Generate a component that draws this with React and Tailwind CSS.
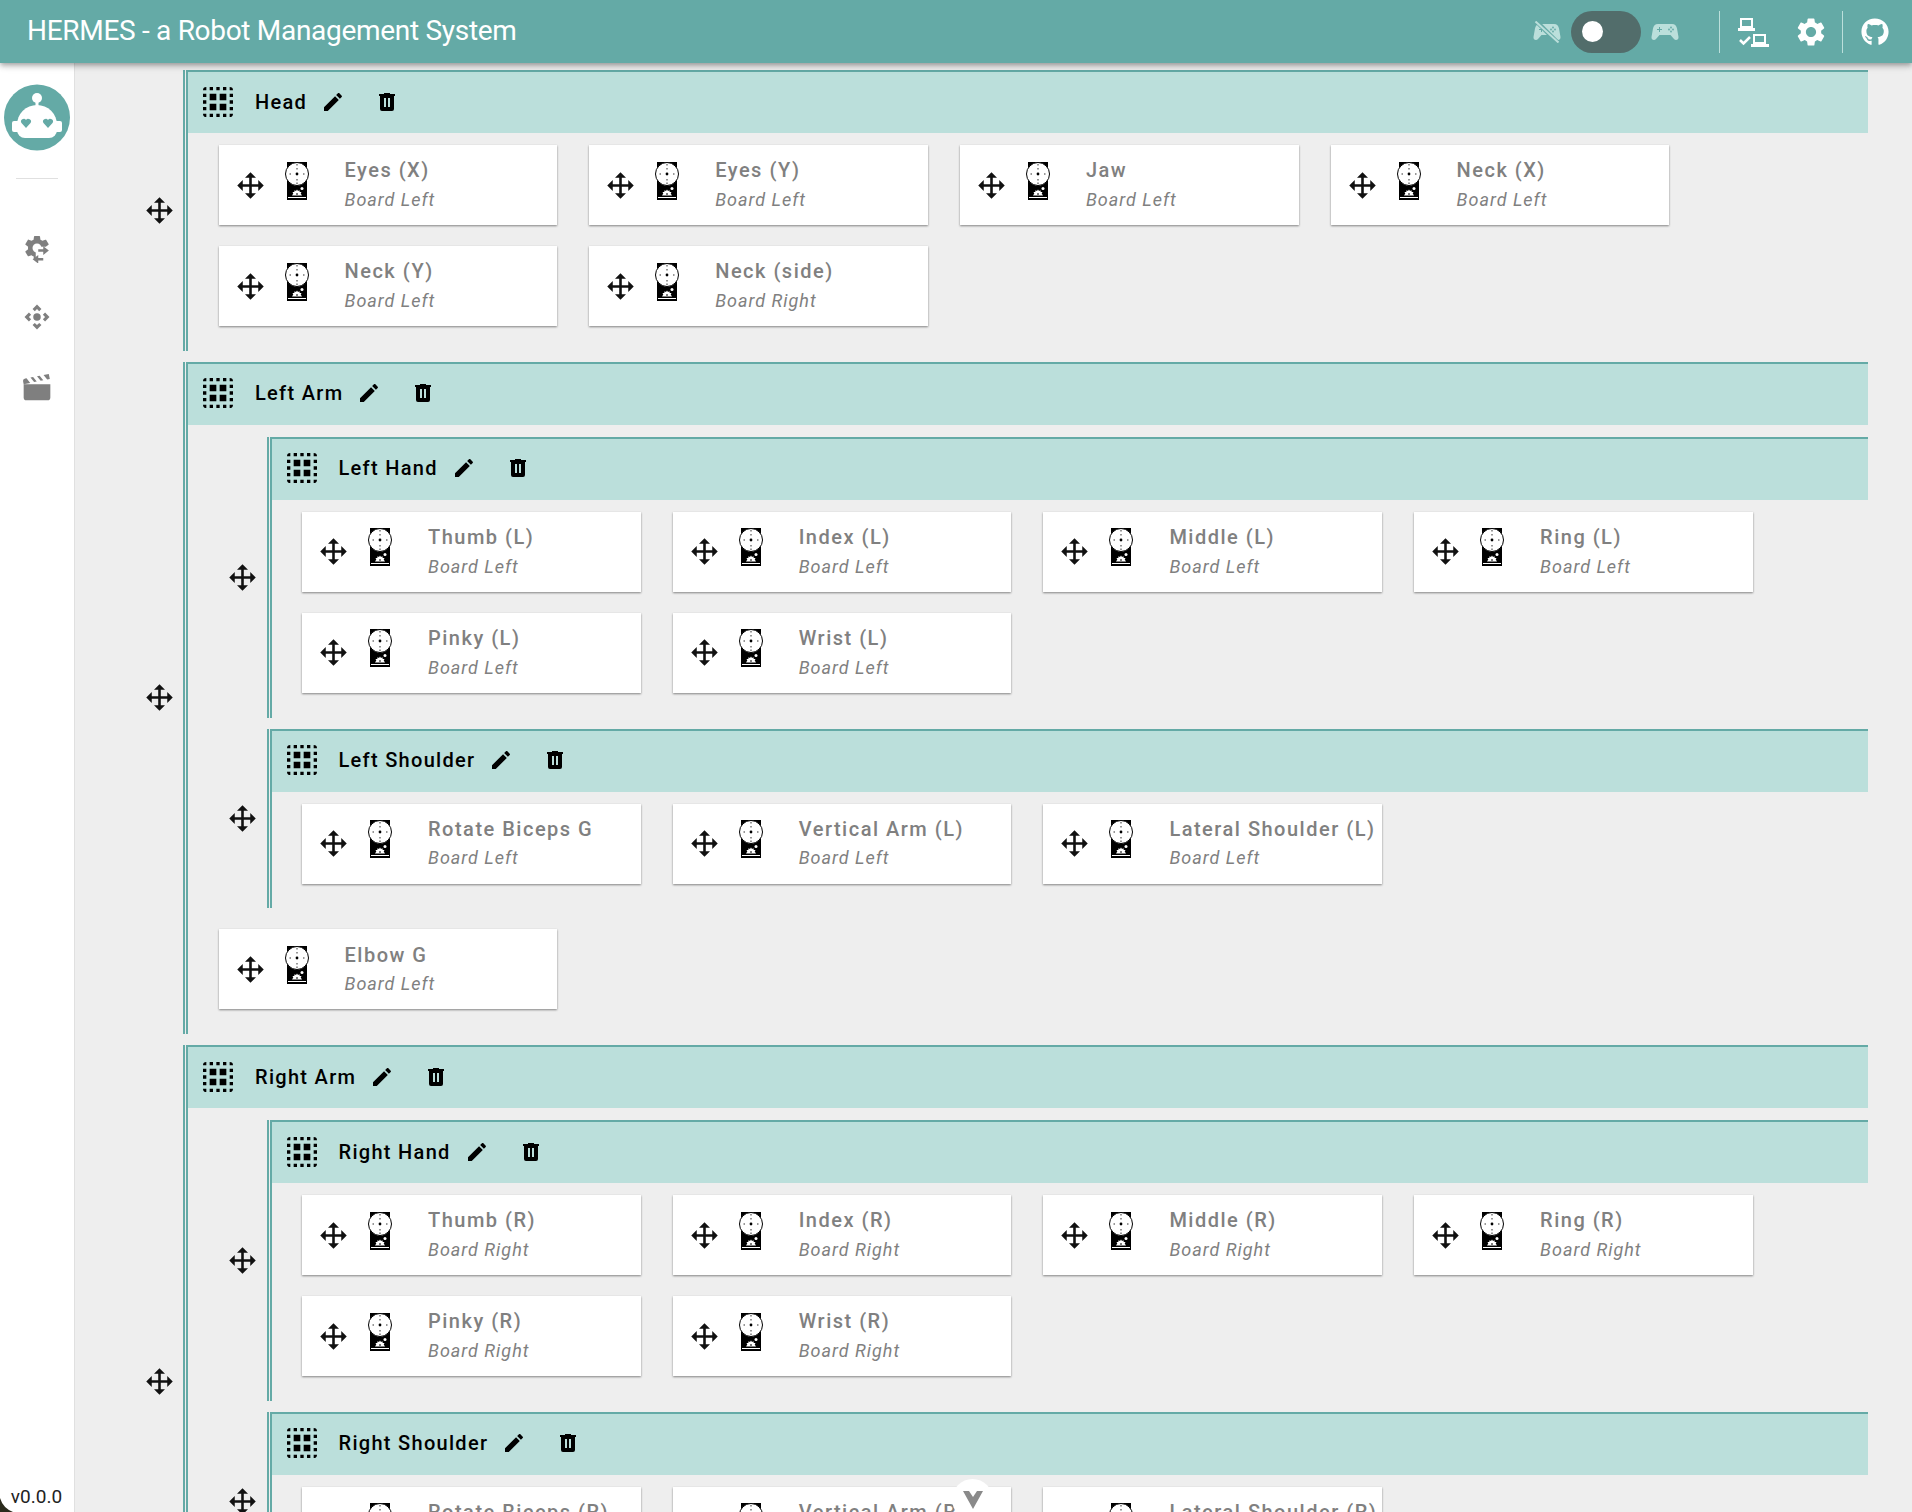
import { MdSettings, MdControlCamera } from "react-icons/md";
import { FaGithub } from "react-icons/fa";

const TEAL = "#64aaa6";

const motor = (name, board = "Left") => ({ name, board: `Board ${board}` });

const hand = (s, board) => ({
  name: `${s === "L" ? "Left" : "Right"} Hand`,
  motors: ["Thumb", "Index", "Middle", "Ring", "Pinky", "Wrist"].map((m) => motor(`${m} (${s})`, board)),
});

const tree = [
  {
    name: "Head",
    motors: [
      motor("Eyes (X)"),
      motor("Eyes (Y)"),
      motor("Jaw"),
      motor("Neck (X)"),
      motor("Neck (Y)"),
      motor("Neck (side)", "Right"),
    ],
  },
  {
    name: "Left Arm",
    groups: [
      hand("L", "Left"),
      {
        name: "Left Shoulder",
        motors: [motor("Rotate Biceps G"), motor("Vertical Arm (L)"), motor("Lateral Shoulder (L)")],
      },
    ],
    motors: [motor("Elbow G")],
  },
  {
    name: "Right Arm",
    groups: [
      hand("R", "Right"),
      {
        name: "Right Shoulder",
        motors: [
          motor("Rotate Biceps (R)", "Right"),
          motor("Vertical Arm (R)", "Right"),
          motor("Lateral Shoulder (R)", "Right"),
        ],
      },
    ],
    motors: [motor("Elbow (R)", "Right")],
  },
];

function MoveIcon() {
  return (
    <svg width="31" height="31" viewBox="0 0 24 24" fill="#111" className="shrink-0">
      <path d="M13,6V11H18V7.75L22.25,12L18,16.25V13H13V18H16.25L12,22.25L7.75,18H11V13H6V16.25L1.75,12L6,7.75V11H11V6H7.75L12,1.75L16.25,6H13Z" />
    </svg>
  );
}

function GroupIcon() {
  return (
    <svg width="40" height="40" viewBox="0 0 24 24" fill="#000" className="shrink-0">
      <path d="M5,3A2,2 0 0,0 3,5H5M7,3V5H9V3M11,3V5H13V3M15,3V5H17V3M19,3V5H21A2,2 0 0,0 19,3M3,7V9H5V7M7,7V11H11V7M13,7V11H17V7M19,7V9H21V7M3,11V13H5V11M19,11V13H21V11M7,13V17H11V13M13,13V17H17V13M3,15V17H5V15M19,15V17H21V15M3,19A2,2 0 0,0 5,21V19M7,19V21H9V19M11,19V21H13V19M15,19V21H17V19M19,19V21A2,2 0 0,0 21,19Z" />
    </svg>
  );
}

function PencilIcon() {
  return (
    <svg width="24" height="24" viewBox="0 0 24 24" fill="#000" className="shrink-0">
      <path d="M3 17.25V21h3.75L17.81 9.94l-3.75-3.75L3 17.25zM20.71 7.04c.39-.39.39-1.02 0-1.41l-2.34-2.34c-.39-.39-1.02-.39-1.41 0l-1.83 1.83 3.75 3.75 1.83-1.83z" />
    </svg>
  );
}

function TrashIcon() {
  return (
    <svg width="24" height="24" viewBox="0 0 24 24" fill="#000" className="shrink-0">
      <path d="M9,3V4H4V6H5V19A2,2 0 0,0 7,21H17A2,2 0 0,0 19,19V6H20V4H15V3H9M9,8H11V17H9V8M13,8H15V17H13V8Z" />
    </svg>
  );
}

// servo board drawing
function ServoIcon() {
  return (
    <svg width="24" height="40" viewBox="0 0 24 40" className="shrink-0 mb-[9px]">
      <rect x="2" y="1" width="20" height="38" fill="#000" />
      <circle cx="12" cy="13" r="11.5" fill="#fff" stroke="#000" strokeWidth="1" />
      <circle cx="12" cy="13" r="1.4" fill="#000" />
      <g fill="#333">
        <rect x="11.500" y="3" width="1" height="1.500" />
        <rect x="11.500" y="7" width="1" height="1.500" />
        <rect x="11.500" y="18" width="1" height="1.500" />
        <rect x="11.500" y="21.500" width="1" height="1.500" />
        <rect x="4.500" y="12.500" width="1.500" height="1" />
        <rect x="18" y="12.500" width="1.500" height="1" />
      </g>
      <path
        d="M12 28.500L13 30L14.500 29.200L14.700 31L16.500 31L15.700 32.500L17 34.500H7L8.300 32.500L7.500 31L9.300 31L9.500 29.200L11 30Z"
        fill="#fff"
      />
      <circle cx="17" cy="27.500" r="1.500" fill="#fff" />
      <rect x="11.500" y="32" width="1" height="2" fill="#000" />
      <rect x="3" y="36" width="18" height="1" fill="#fff" />
    </svg>
  );
}

function MotorCard({ name, board }) {
  return (
    <div className="w-[338.7px] h-[80px] bg-white shadow-[0_1px_2px_rgba(0,0,0,0.45)] flex items-center pl-[16px] shrink-0">
      <MoveIcon />
      <div className="ml-[19px]">
        <ServoIcon />
      </div>
      <div className="ml-[36px] min-w-0 whitespace-nowrap text-[#808080]">
        <div className="text-[20px] leading-[24px] font-medium tracking-[1.5px]">{name}</div>
        <div className="text-[18px] leading-[24px] italic tracking-[1px] mt-[5.5px]">{board}</div>
      </div>
    </div>
  );
}

function Group({ name, motors = [], groups = [] }) {
  return (
    <div className="flex mb-[11px]">
      <div className="w-[48px] shrink-0 flex items-center justify-center">
        <MoveIcon />
      </div>
      <div className="flex-1 min-w-0 border-l-[5px] border-double border-[#64aaa6]">
        <div className="h-[63px] bg-[#bbdfdb] border-t-2 border-[#64aaa6] flex items-center pl-[10px] pb-[2px]">
          <GroupIcon />
          <span className="ml-[17px] text-[20px] font-medium tracking-[1.3px] text-black whitespace-nowrap">{name}</span>
          <span className="ml-[14px]">
            <PencilIcon />
          </span>
          <span className="ml-[30px]">
            <TrashIcon />
          </span>
        </div>
        <div className="pl-[30.5px] pt-[12px] pb-[24.75px]">
          {groups.map((g) => (
            <Group key={g.name} {...g} />
          ))}
          {motors.length > 0 && (
            <div className={`flex flex-wrap gap-x-[32px] gap-y-[21px] ${groups.length ? "mt-[21px]" : ""}`}>
              {motors.map((m) => (
                <MotorCard key={m.name} {...m} />
              ))}
            </div>
          )}
        </div>
      </div>
    </div>
  );
}

function Logo() {
  return (
    <svg width="66" height="67" viewBox="0 0 66 67">
      <circle cx="33" cy="33.500" r="33" fill={TEAL} />
      <circle cx="33" cy="14" r="5" fill="#fff" />
      <rect x="31.500" y="14" width="3" height="9" fill="#fff" />
      <rect x="8" y="37" width="50" height="11" rx="2" fill="#fff" />
      <path d="M13 41a20 20 0 0 1 40 0v5a8 8 0 0 1-8 8H21a8 8 0 0 1-8-8z" fill="#fff" />
      <path d="M22 44l-4.500-5a2.600 2.600 0 0 1 4.500-3a2.600 2.600 0 0 1 4.500 3z" fill={TEAL} />
      <path d="M44 44l-4.500-5a2.600 2.600 0 0 1 4.500-3a2.600 2.600 0 0 1 4.500 3z" fill={TEAL} />
    </svg>
  );
}

function CogSyncIcon() {
  return (
    <svg width="30" height="30" viewBox="0 0 24 24" fill="#7f7f7f">
      <path d="M19.14,12.94c0.04-0.3,0.06-0.61,0.06-0.94c0-0.32-0.02-0.64-0.07-0.94l2.03-1.58c0.18-0.14,0.23-0.41,0.12-0.61l-1.92-3.32c-0.12-0.22-0.37-0.29-0.59-0.22l-2.39,0.96c-0.5-0.38-1.03-0.7-1.62-0.94L14.4,2.81c-0.04-0.24-0.24-0.41-0.48-0.41h-3.84c-0.24,0-0.43,0.17-0.47,0.41L9.25,5.35C8.66,5.59,8.12,5.92,7.63,6.29L5.24,5.33c-0.22-0.08-0.47,0-0.59,0.22L2.74,8.87C2.62,9.08,2.66,9.34,2.86,9.48l2.03,1.58C4.84,11.36,4.8,11.69,4.8,12s0.02,0.64,0.07,0.94l-2.03,1.58c-0.18,0.14-0.23,0.41-0.12,0.61l1.92,3.32c0.12,0.22,0.37,0.29,0.59,0.22l2.39-0.96c0.5,0.38,1.03,0.7,1.62,0.94l0.36,2.54c0.05,0.24,0.24,0.41,0.48,0.41h3.84c0.24,0,0.44-0.17,0.47-0.41l0.36-2.54c0.59-0.24,1.13-0.56,1.62-0.94l2.39,0.96c0.22,0.08,0.47,0,0.59-0.22l1.92-3.32c0.12-0.22,0.07-0.47-0.12-0.61L19.14,12.94z M12,15.6c-1.98,0-3.6-1.62-3.6-3.6s1.62-3.6,3.6-3.6s3.6,1.62,3.6,3.6S13.98,15.6,12,15.6z" />
      <rect x="11" y="11" width="13" height="13" fill="#fff" />
      <path d="M13 13h4v-2.500l4.500 3.500l-4.500 3.500V15h-4z" />
      <path d="M17 20h-4v-2.500L8.500 21l4.500 3.500V22h4z" />
    </svg>
  );
}

function ClapperIcon() {
  return (
    <svg width="32" height="32" viewBox="0 0 24 24" fill="#7f7f7f">
      <path d="M20.84 2.18L16.91 2.96L19.65 6.39L21.62 6L20.84 2.18M13.97 3.54L12 3.93L14.75 7.36L16.71 6.97L13.97 3.54M9.07 4.5L7.1 4.91L9.85 8.33L11.81 7.94L9.07 4.5M4.16 5.5L3.18 5.69A2 2 0 0 0 1.61 8.04L2 10L6.9 9.03L4.16 5.5M2 10V20C2 21.11 2.9 22 4 22H20C21.11 22 22 21.11 22 20V10H2Z" />
    </svg>
  );
}

function Gamepad({ off }) {
  return (
    <svg width="28" height="22" viewBox="0 0 28 22">
      <path
        d="M7 3h14c3 0 4.500 2 5 4.500l1.500 8.500c.4 3-3 4-4.500 2l-3.500-4h-11l-3.500 4c-1.500 2-4.900 1-4.500-2L2 7.500C2.500 5 4 3 7 3z"
        fill="#bbdfdb"
      />
      <path d="M6 8.500h5M8.500 6v5" stroke={TEAL} strokeWidth="1" />
      <g fill={TEAL}>
        <circle cx="20" cy="6.500" r="0.900" />
        <circle cx="20" cy="10.500" r="0.900" />
        <circle cx="18" cy="8.500" r="0.900" />
        <circle cx="22" cy="8.500" r="0.900" />
      </g>
      {off && <path d="M3 0L25 22" stroke={TEAL} strokeWidth="4.500" />}
      {off && <path d="M2.500 0.500L25.500 21.500" stroke="#bbdfdb" strokeWidth="2" />}
    </svg>
  );
}

function LaptopsIcon() {
  return (
    <svg width="32" height="30" viewBox="0 0 32 30" fill="#fff">
      <path d="M3 1h13v10H3z M5 3v6h9V3z" fillRule="evenodd" />
      <rect x="1" y="11" width="17" height="3" />
      <path d="M16 17h13v10H16z M18 19v6h9v-6z" fillRule="evenodd" />
      <rect x="14" y="27" width="18" height="3" />
      <path d="M3 23l3.500 3.500L13 20" fill="none" stroke="#fff" strokeWidth="2.500" />
    </svg>
  );
}

export default function App() {
  return (
    <div className="h-screen overflow-hidden flex flex-col bg-[#eeeeee] relative font-['Roboto',sans-serif]">
      <header className="h-[63px] shrink-0 relative z-10 bg-[#64aaa6] text-white flex items-center pl-[27px] pr-[23px] shadow-[0_2px_4px_-1px_rgba(0,0,0,0.2),0_4px_5px_0_rgba(0,0,0,0.14),0_1px_10px_0_rgba(0,0,0,0.12)]">
        <h1 className="text-[28px] font-normal tracking-[-0.3px] whitespace-nowrap -mt-[2px]">HERMES - a Robot Management System</h1>
        <div className="ml-auto flex items-center">
          <Gamepad off />
          <div className="w-[70px] h-[42px] rounded-full bg-[#526d6b] flex items-center pl-[11px] ml-[10px]">
            <div className="w-[21px] h-[21px] rounded-full bg-white" />
          </div>
          <div className="ml-[10px]">
            <Gamepad />
          </div>
          <div className="w-px h-[42px] bg-[#bbdfdb] ml-[40px]" />
          <div className="ml-[17px]">
            <LaptopsIcon />
          </div>
          <MdSettings className="ml-[25px] text-white" size={34} />
          <div className="w-px h-[42px] bg-[#bbdfdb] ml-[14px]" />
          <FaGithub className="ml-[18px] text-white" size={28} />
        </div>
      </header>
      <div className="flex-1 min-h-0 flex">
        <aside className="w-[75px] shrink-0 bg-white border-r border-[#e0e0e0] flex flex-col items-center pt-[21px] relative">
          <Logo />
          <div className="w-[42px] h-px bg-[#e0e0e0] mt-[27px]" />
          <div className="mt-[54px]">
            <CogSyncIcon />
          </div>
          <MdControlCamera className="mt-[39px]" size={30} color="#7f7f7f" />
          <div className="mt-[39px]">
            <ClapperIcon />
          </div>
          <div className="mt-auto mb-[3px] text-[19px] leading-[24px] text-[#222] -ml-[1px]">v0.0.0</div>
          <svg width="13" height="14" viewBox="0 0 13 14" className="absolute left-0 bottom-0">
            <path d="M0 0Q3 10 13 14H0z" fill="#2b2b1c" />
          </svg>
        </aside>
        <main className="flex-1 min-w-0 overflow-hidden pl-[60px] pr-[44px] pt-[7px]">
          {tree.map((g) => (
            <Group key={g.name} {...g} />
          ))}
        </main>
      </div>
      <div className="absolute left-[952px] top-[1479px] w-[41px] h-[41px] rounded-full bg-white flex justify-center pt-[12px]">
        <svg width="20" height="18" viewBox="0 0 20 18">
          <path d="M0 0H6L10 6L14 0H20L10 18Z" fill="#8a8a8a" />
        </svg>
      </div>
    </div>
  );
}
